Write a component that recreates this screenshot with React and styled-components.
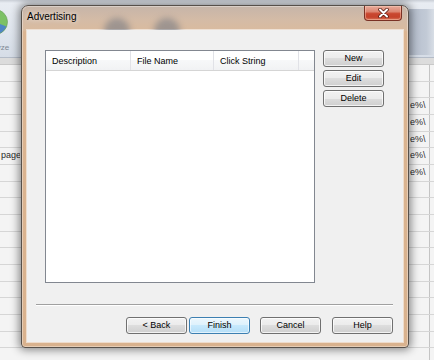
import React from 'react';
import styled, { createGlobalStyle, css } from 'styled-components';

const GlobalStyle = createGlobalStyle`
  html, body { margin: 0; padding: 0; }
  body {
    width: 434px;
    height: 360px;
    overflow: hidden;
    background: #f3f3f3;
    font-family: "Liberation Sans", Arial, sans-serif;
  }
`;

const Screen = styled.div`
  position: relative;
  width: 434px;
  height: 360px;
  overflow: hidden;
  background: #f3f3f3;
`;

// background application (mostly hidden behind the dialog)
const Toolbar = styled.div`
  display: flex;
  height: 57px;
  border-bottom: 1px solid #b4bcc8;
  background: linear-gradient(to bottom, #c9ced6 0, #e8ecf2 3px, #e0e6ee 30px, #d6dde7 100%);
`;

const ToolButton = styled.div`
  display: flex;
  flex-direction: column;
  align-items: center;
  width: 34px;
  margin-left: -22px;
  padding-top: 9px;
  gap: 8px;
`;

const ToolLabel = styled.span`
  font-size: 8px;
  color: #7f8894;
`;

const Spacer = styled.div`
  flex: 1;
`;

const SidePane = styled.div`
  width: 25px;
  margin-top: 9px;
  margin-bottom: 2px;
  background: linear-gradient(to right, #b3bccb 0, #c2cad6 70%, #d8dee6 100%);
`;

const HeadStrip = styled.div`
  height: 6px;
  background: #dcdcdc;
  border-bottom: 1px solid #c9c9c9;
`;

const Row = styled.div`
  display: grid;
  grid-template-columns: 20px 390px 20px 1fr;
  height: 16.67px;
  box-sizing: border-box;
  border-bottom: 1px solid #d6d6d6;
  background: #f4f4f4;
  font-size: 9px;
  color: #2a2a2a;
  line-height: 15px;
`;

const Cell = styled.div`
  overflow: hidden;
  white-space: nowrap;
  padding-left: ${p => p.$pad ?? 1}px;
  border-right: ${p => (p.$line ? '1px solid #c4c4c4' : 'none')};
`;

// dialog window
const Window = styled.div`
  position: absolute;
  left: 21px;
  top: 5px;
  width: 388px;
  height: 343px;
  box-sizing: border-box;
  display: flex;
  flex-direction: column;
  border: 1px solid #57504a;
  border-radius: 7px 7px 4px 4px;
  background: linear-gradient(to bottom, #c6b5a9 0, #d4bba6 14px, #d9bb9f 24px, #dbb592 26px, #d9b28e 100%);
  box-shadow: 0 0 8px 2px rgba(0, 0, 0, 0.45), inset 0 0 0 1px rgba(255, 255, 255, 0.35);
`;

const TitleBar = styled.div`
  position: relative;
  display: flex;
  align-items: flex-start;
  justify-content: space-between;
  height: 24px;
  padding-left: 5px;
  overflow: hidden;
`;

const GlassBlob = styled.span`
  position: absolute;
  top: 12px;
  left: ${p => p.$x}px;
  width: 26px;
  height: 26px;
  border-radius: 50%;
  background: rgba(88, 102, 122, 0.45);
  filter: blur(3px);
`;

const Title = styled.span`
  position: relative;
  padding-top: 5px;
  font-size: 10px;
  line-height: 12px;
  color: #000;
  text-shadow: 0 0 5px rgba(255, 255, 255, 0.9);
`;

const CloseButton = styled.div`
  position: relative;
  display: flex;
  align-items: center;
  justify-content: center;
  width: 38px;
  height: 15px;
  margin-right: 6px;
  box-sizing: border-box;
  border: 1px solid #7a3124;
  border-top: none;
  border-radius: 0 0 4px 4px;
  background: linear-gradient(to bottom, #e7ab9b 0, #dd8772 40%, #c9472f 55%, #c5432b 80%, #d9765a 100%);
  box-shadow: inset 0 0 0 1px rgba(255, 210, 190, 0.45);
`;

const Client = styled.div`
  flex: 1;
  display: flex;
  flex-direction: column;
  margin: 0 5px 5px;
  padding: 20px 10px 8px 9px;
  background: #f0f0f0;
  box-shadow: 0 0 0 1px rgba(255, 255, 255, 0.55);
`;

const Main = styled.div`
  display: flex;
  gap: 8px;
  margin-left: 9px;
  height: 233px;
`;

const ListBox = styled.div`
  width: 270px;
  height: 233px;
  box-sizing: border-box;
  border: 1px solid #828790;
  background: #fff;
`;

const Header = styled.div`
  display: flex;
  height: 20px;
  box-sizing: border-box;
  border-bottom: 1px solid #d5d5d5;
  background: linear-gradient(to bottom, #ffffff 0, #ffffff 50%, #f7f8f9 50%, #f1f2f4 100%);
`;

const HeaderCell = styled.div`
  width: ${p => p.$w}px;
  flex: ${p => (p.$w ? 'none' : 1)};
  box-sizing: border-box;
  padding-left: 6px;
  border-right: ${p => (p.$w ? '1px solid #e1e2e7' : 'none')};
  font-size: 9px;
  line-height: 20px;
  color: #000;
  white-space: nowrap;
  overflow: hidden;
`;

const SideButtons = styled.div`
  display: flex;
  flex-direction: column;
  gap: 3px;
`;

const Button = styled.button`
  width: 61px;
  height: 17px;
  margin: 0;
  padding: 0;
  box-sizing: border-box;
  border: 1px solid #707070;
  border-radius: 3px;
  background: linear-gradient(to bottom, #f2f2f2 0, #ebebeb 50%, #dddddd 50%, #cfcfcf 100%);
  box-shadow: inset 0 0 0 1px rgba(255, 255, 255, 0.75);
  font-family: "Liberation Sans", Arial, sans-serif;
  font-size: 9px;
  line-height: 15px;
  color: #000;
  margin-left: ${p => p.$gap || 0}px;
  ${p => p.$primary && css`
    border-color: #3c7fb1;
    background: linear-gradient(to bottom, #ecf7fd 0, #ddf1fc 50%, #c7e9fc 50%, #b4def7 100%);
    box-shadow: inset 0 0 0 1px rgba(255, 255, 255, 0.6);
  `}
`;

const Separator = styled.div`
  margin-top: 21px;
  border-top: 1px solid #a0a0a0;
  border-bottom: 1px solid #ffffff;
`;

const Footer = styled.div`
  display: flex;
  justify-content: flex-end;
  margin-top: 11px;
`;

const PieIcon = () => (
  <svg width="26" height="26" viewBox="0 0 26 26">
    <circle cx="13" cy="13" r="12.5" fill="#7cc166" />
    <path d="M13 13 L24.5 17.5 A12.5 12.5 0 0 1 5 22.6 Z" fill="#4f86c6" />
    <circle cx="13" cy="13" r="12.5" fill="none" stroke="#6a9e5b" strokeWidth="0.6" />
  </svg>
);

const CloseGlyph = () => (
  <svg width="11" height="10" viewBox="0 0 11 10">
    <path d="M2 1.5 L9 8.5 M9 1.5 L2 8.5" stroke="#5b1d12" strokeWidth="3.6" strokeLinecap="round" />
    <path d="M2 1.5 L9 8.5 M9 1.5 L2 8.5" stroke="#ffffff" strokeWidth="2" strokeLinecap="round" />
  </svg>
);

const rightTexts = { 2: 'e%\\', 3: 'e%\\', 4: 'e%\\', 5: 'e%\\', 6: 'e%\\' };

export default function App() {
  const rows = Array.from({ length: 18 }, (_, i) => i);
  return (
    <Screen>
      <GlobalStyle />
      <Toolbar>
        <ToolButton>
          <PieIcon />
          <ToolLabel>Analyze</ToolLabel>
        </ToolButton>
        <Spacer />
        <SidePane />
      </Toolbar>
      <HeadStrip />
      {rows.map(i => (
        <Row key={i}>
          <Cell>{i === 5 ? 'page' : ''}</Cell>
          <Cell />
          <Cell $line $pad={0}>{rightTexts[i] || ''}</Cell>
          <Cell />
        </Row>
      ))}

      <Window>
        <TitleBar>
          <GlassBlob $x={82} />
          <GlassBlob $x={132} />
          <Title>Advertising</Title>
          <CloseButton>
            <CloseGlyph />
          </CloseButton>
        </TitleBar>
        <Client>
          <Main>
            <ListBox>
              <Header>
                <HeaderCell $w={85}>Description</HeaderCell>
                <HeaderCell $w={83}>File Name</HeaderCell>
                <HeaderCell $w={85}>Click String</HeaderCell>
                <HeaderCell />
              </Header>
            </ListBox>
            <SideButtons>
              <Button>New</Button>
              <Button>Edit</Button>
              <Button>Delete</Button>
            </SideButtons>
          </Main>
          <Separator />
          <Footer>
            <Button>&lt; Back</Button>
            <Button $primary $gap={2}>Finish</Button>
            <Button $gap={10}>Cancel</Button>
            <Button $gap={11}>Help</Button>
          </Footer>
        </Client>
      </Window>
    </Screen>
  );
}
